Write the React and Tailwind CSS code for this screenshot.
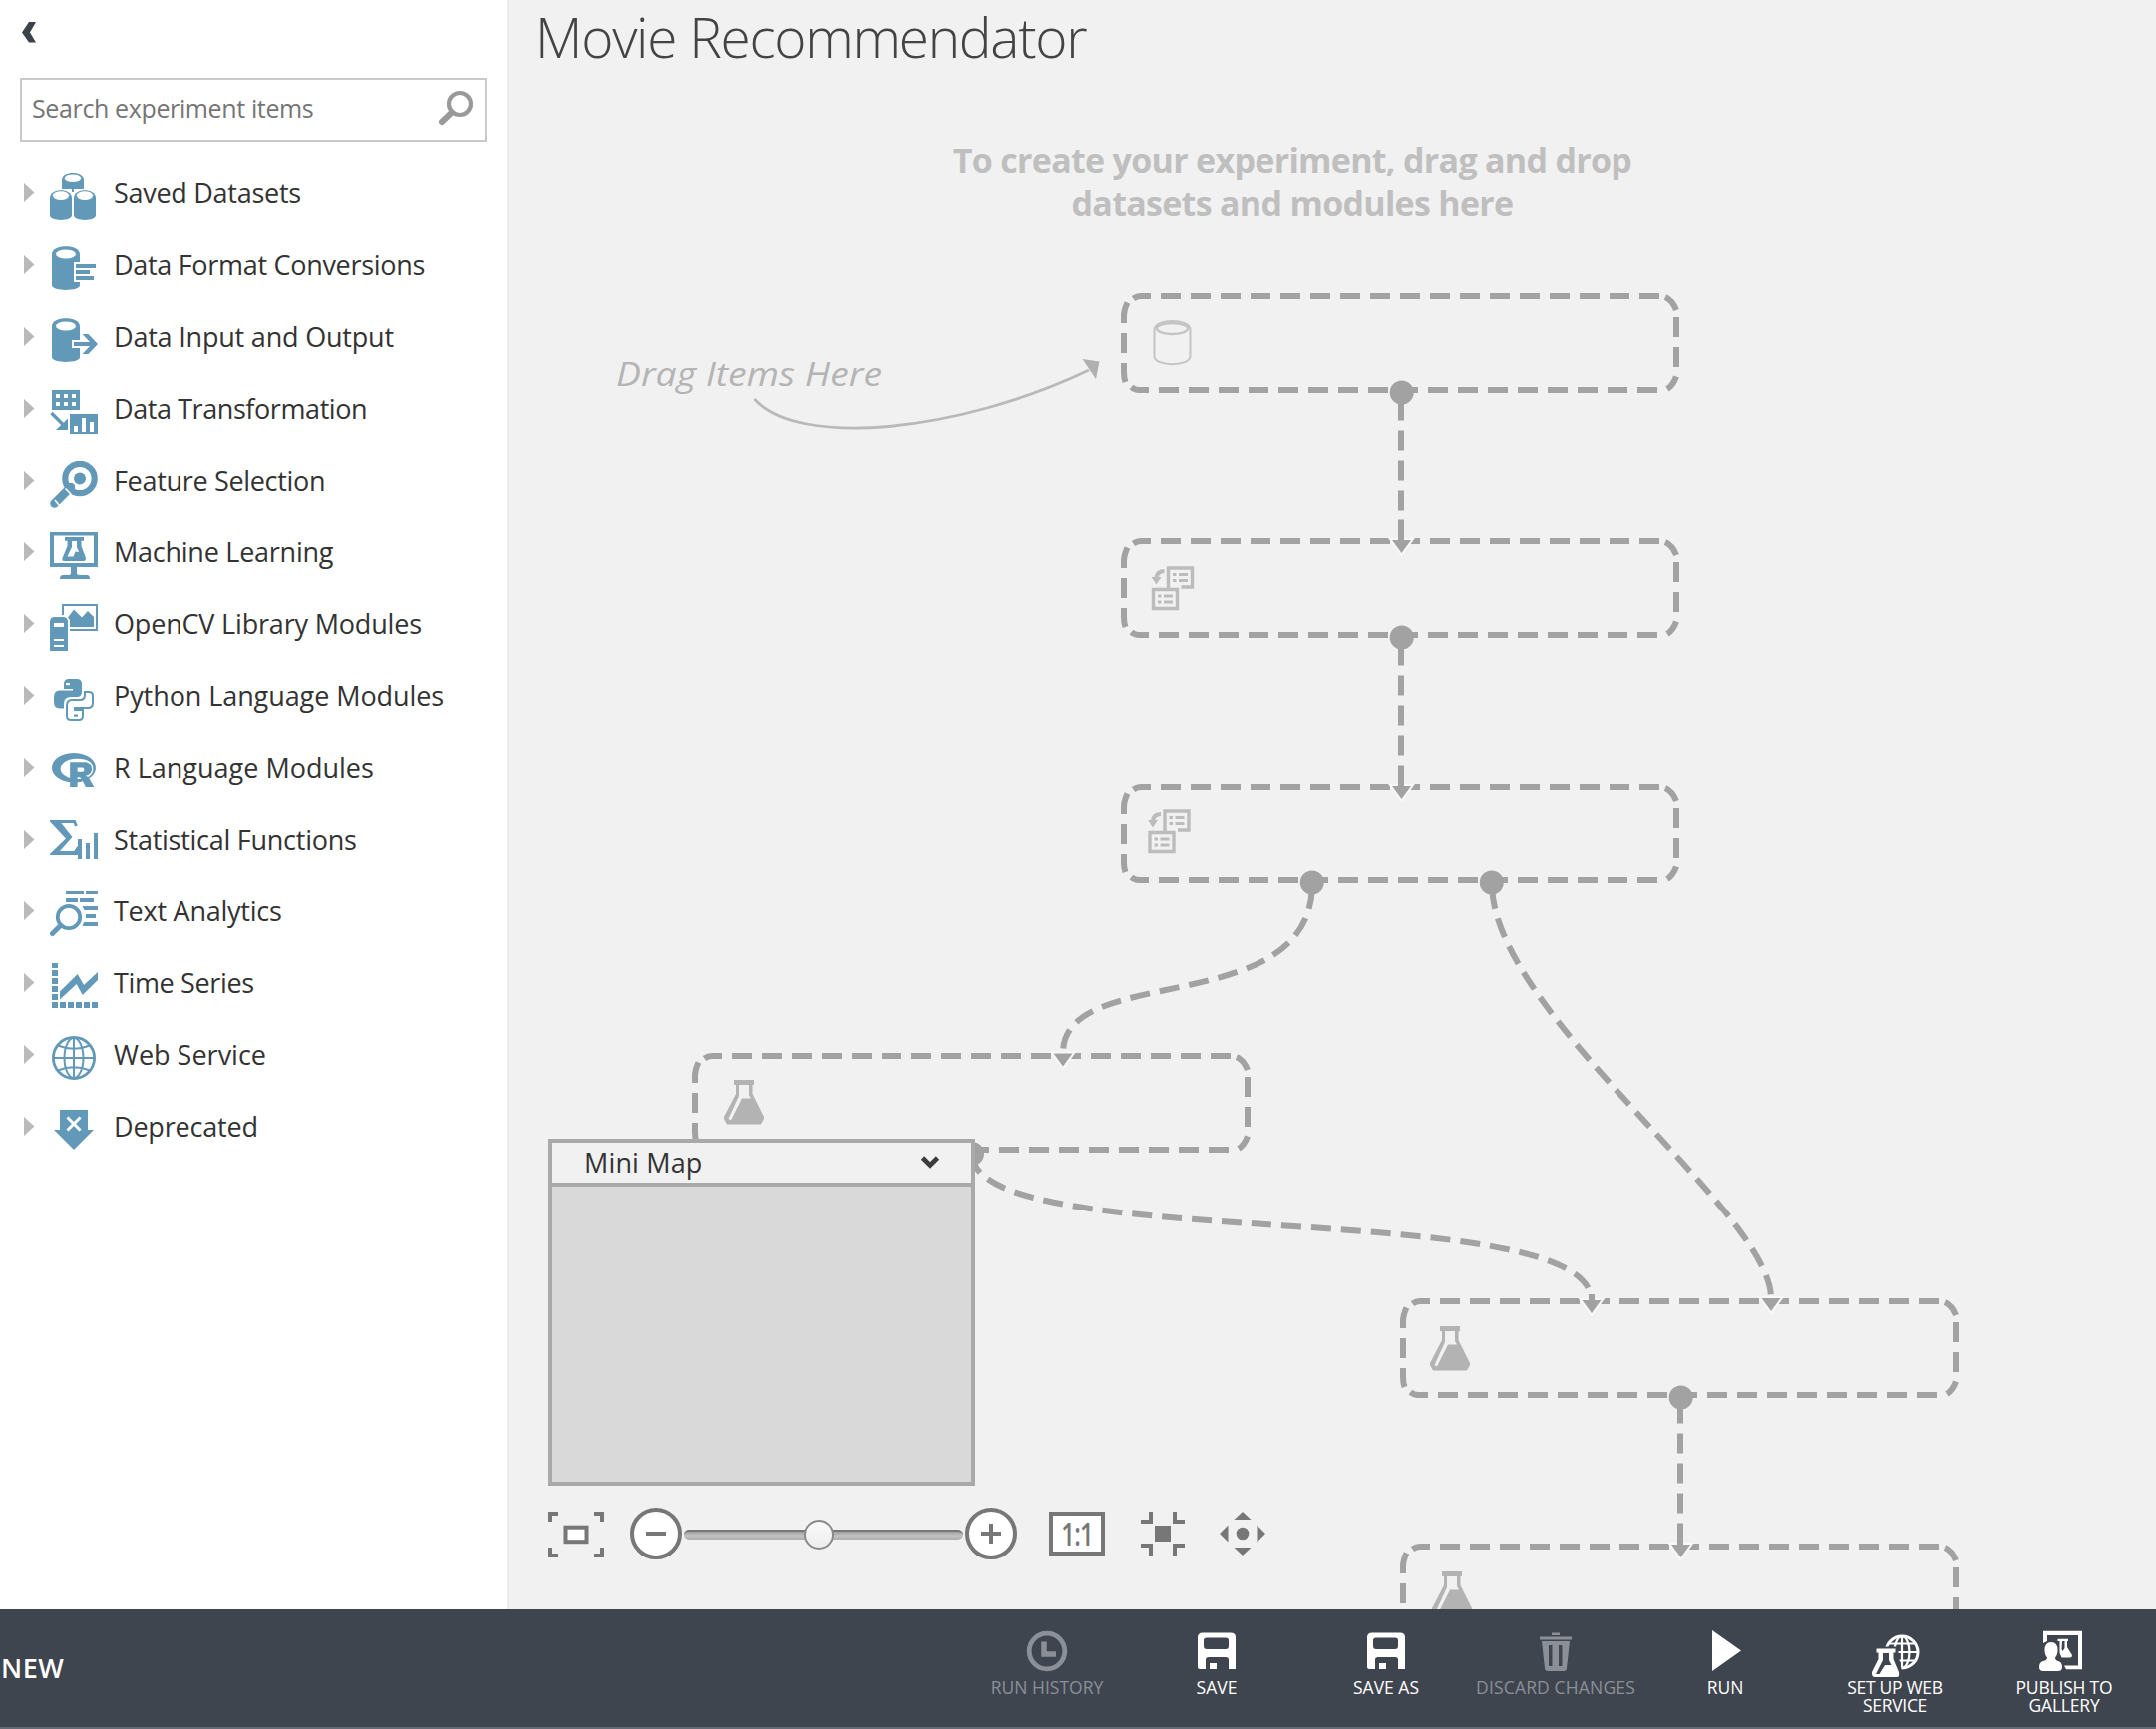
import { FaRProject } from 'react-icons/fa';

const BLUE = '#6399b8';

function Cylinder({ x = 2, y = 1, w = 28, h = 44, rx = 10, ry = 4.5, cy = 9 }) {
  const r = w / 2;
  return (
    <>
      <path d={`M${x} ${y + 8} C${x} ${y - 2.5} ${x + w} ${y - 2.5} ${x + w} ${y + 8} V${y + h - 5} C${x + w} ${y + h + 1.5} ${x} ${y + h + 1.5} ${x} ${y + h - 5} Z`} fill={BLUE} />
      <ellipse cx={x + r} cy={cy} rx={rx} ry={ry} fill="#fff" />
    </>
  );
}

function Flask({ x = 0, y = 0, body = '#b3b3b3', gap = '#f1f1f1' }) {
  return (
    <g transform={`translate(${x} ${y})`}>
      <path d="M10 0 H30 V5 H28.5 V14 L40 37 V39 L37 44.5 H3 L0 39 V37 L12 14 V5 H10 Z" fill={body} />
      <path d="M15 5 H25 V15 L27 18.5 H18.5 L7 40.5 L4.5 39 L15 16 Z" fill={gap} />
      <path d="M18.5 18.5 L7.5 41" stroke={body} strokeWidth="1" />
    </g>
  );
}

const icons = {
  datasets: (
    <>
      <path d="M12 7 C12 -2.3 34 -2.3 34 7 V16 L24 16 V19 H22 V16 L12 16 Z" fill={BLUE} />
      <ellipse cx="23" cy="5.2" rx="8.2" ry="3.8" fill="#fff" />
      <Cylinder x={0} y={17} w={22} h={30} rx={8.2} ry={4.3} cy={22.6} />
      <Cylinder x={24} y={17} w={22} h={30} rx={8.2} ry={4.3} cy={22.6} />
    </>
  ),
  format: (
    <>
      <Cylinder />
      <path d="M24 17 H48 V37 H24 Z" fill="#fff" />
      <path d="M26 19 H46 V23 H26 Z M26 25 H40 V29 H26 Z M26 31 H44 V35 H26 Z" fill={BLUE} />
    </>
  ),
  io: (
    <>
      <Cylinder />
      <path d="M22 23 H32 V31 H22 Z" fill="#fff" />
      <path d="M24 25 H40 L32.5 17 H38.5 L48 27 L38.5 37 H32.5 L40 29 H24 Z" fill={BLUE} />
    </>
  ),
  transform: (
    <>
      <path d="M2 1 H30 V21 H2 Z M20 25 H48 V45 H20 Z" fill={BLUE} />
      <path d="M6 5h4v4h-4z M14 5h4v4h-4z M22 5h4v4h-4z M6 13h4v4h-4z M14 13h4v4h-4z M22 13h4v4h-4z M24 37h4v6h-4z M32 29h4v14h-4z M40 33h4v10h-4z" fill="#fff" />
      <path d="M1.5 24 L14 36.5" stroke={BLUE} strokeWidth="3.4" />
      <path d="M18 29.5 V41 H6 Z" fill={BLUE} />
    </>
  ),
  feature: (
    <>
      <circle cx="30" cy="17.5" r="14.7" fill="none" stroke={BLUE} strokeWidth="6.2" />
      <circle cx="30" cy="17.5" r="6" fill={BLUE} />
      <path d="M21 26 L4.5 42.5" stroke={BLUE} strokeWidth="8.5" strokeLinecap="round" />
      <path d="M15.5 27.5 L21 33 M5 39 L9 44" stroke="#fff" strokeWidth="1.6" />
    </>
  ),
  ml: (
    <>
      <path d="M0 0 H48 V35 H0 Z M4 3.5 V31 H44 V3.5 Z" fillRule="evenodd" fill={BLUE} />
      <path d="M21 35 H27 V41 Q27 43 30 43 H37 Q40 43 40 47 H10 Q10 43 13 43 H18 Q21 43 21 41 Z" fill={BLUE} />
      <path d="M15 5 H34 V8.7 H31.5 V14 L36 26 Q36 29 34 29 H14 Q12 29 12.5 26 L17.5 14 V8.7 H15 Z" fill={BLUE} />
      <path d="M22 9 H27 V15 L29 20 L25.5 19.5 L23.5 24.5 H17.5 L22 15 Z" fill="#fff" />
    </>
  ),
  opencv: (
    <>
      <path d="M13 11 V1 H47 V26 H20" fill="none" stroke={BLUE} strokeWidth="2" />
      <path d="M18 13.5 L24 5.5 L32 13.5 L38 7 L44 13 V23 H20 V16 Z" fill={BLUE} />
      <path d="M0 47 V18 Q0 13 5 13 H13 Q18 13 18 18 V47 Z" fill={BLUE} />
      <path d="M4 19h10v4h-10z M4 35h10v2h-10z M4 41h10v2h-10z" fill="#fff" />
    </>
  ),
  python: (
    <>
      <path d="M14 8 Q14 3 19 3 H27 Q32 3 32 8 V16 Q32 21 27 21 H21 Q14 21 14 28 V32.5 H10 Q4 32.5 4 26 V21 Q4 14.5 10 14.5 H23 V13 H14 Z" fill={BLUE} />
      <path d="M16 7 h4 v2.2 h-4z" fill="#fff" />
      <path d="M35 16 H39 Q43 16 43 20 V27 Q43 32 38 32 H25 V34 H33 V40 Q33 44 29 44 H21 Q17 44 17 40 V30 Q17 24 22 24 H30 Q35 24 35 19 Z" fill="none" stroke={BLUE} strokeWidth="2" />
      <path d="M24 38.5 h4 v2.2 h-4z" fill={BLUE} />
    </>
  ),
  stats: (
    <>
      <path d="M26.5 6 L24.5 1.5 H3 L19.5 17.3 L3 33.5 H25 L28.5 27" fill="none" stroke={BLUE} strokeWidth="3" />
      <path d="M0 0 H9 L22.5 17 L10 31 H24 L28 27 V35 H0 V34 L16 18.5 L0 1.5 Z" fill={BLUE} />
      <path d="M28 19h4v20h-4z M36 23h4v16h-4z M44 13h4v26h-4z" fill={BLUE} />
    </>
  ),
  text: (
    <>
      <path d="M16 0h18v3h-18z M36 0h12v3h-12z M16 7h12v4h-12z M30 7h14v4h-14z M32.5 15h15.5v4h-13.5z M36 23h10v4h-10z M34 31h14v4h-15.5z" fill={BLUE} />
      <circle cx="19" cy="26" r="11.2" fill="none" stroke={BLUE} strokeWidth="3.8" />
      <path d="M10.5 34.5 L2.5 42.5" stroke={BLUE} strokeWidth="5" strokeLinecap="round" />
    </>
  ),
  time: (
    <>
      <path d="M2 0h6v5h-6z M2 7h6v6h-6z M2 15h6v6h-6z M2 23h6v6h-6z M2 31h6v6h-6z M2 39h6v6h-6z M10 39h6v6h-6z M18 39h6v6h-6z M26 39h6v6h-6z M34 39h6v6h-6z M42 39h6v6h-6z" fill={BLUE} />
      <path d="M10 28.5 L27.7 11 L34 22 L48 9 V17 L32.7 32 L26.7 21 L10 36.5 Z" fill={BLUE} />
    </>
  ),
  web: (
    <g fill="none" stroke={BLUE} strokeWidth="2">
      <circle cx="24" cy="23" r="20.6" strokeWidth="2.8" />
      <ellipse cx="24" cy="23" rx="9.5" ry="20" />
      <path d="M24 2 V44 M3 23 H45 M8 10.5 Q24 17 40 10.5 M8 35.5 Q24 29 40 35.5" />
    </g>
  ),
  deprecated: (
    <>
      <path d="M10 3 H38 V23 H44 L24 43 L4 23 H10 Z" fill={BLUE} />
      <path d="M17.5 10.5 L30.5 23.5 M30.5 10.5 L17.5 23.5" stroke="#fff" strokeWidth="3" />
    </>
  ),
};

const items = [
  { icon: 'datasets', label: 'Saved Datasets', tracking: 'tracking-[-0.28px]' },
  { icon: 'format', label: 'Data Format Conversions', tracking: 'tracking-[-0.3px]' },
  { icon: 'io', label: 'Data Input and Output', tracking: 'tracking-[-0.2px]' },
  { icon: 'transform', label: 'Data Transformation', tracking: 'tracking-[-0.42px]' },
  { icon: 'feature', label: 'Feature Selection', tracking: 'tracking-[-0.32px]' },
  { icon: 'ml', label: 'Machine Learning', tracking: 'tracking-[-0.25px]' },
  { icon: 'opencv', label: 'OpenCV Library Modules', tracking: 'tracking-[-0.18px]' },
  { icon: 'python', label: 'Python Language Modules', tracking: 'tracking-[-0.08px]' },
  { icon: 'r', label: 'R Language Modules', tracking: 'tracking-normal' },
  { icon: 'stats', label: 'Statistical Functions', tracking: 'tracking-[-0.26px]' },
  { icon: 'text', label: 'Text Analytics', tracking: 'tracking-[-0.25px]' },
  { icon: 'time', label: 'Time Series', tracking: 'tracking-[-0.36px]' },
  { icon: 'web', label: 'Web Service', tracking: 'tracking-normal' },
  { icon: 'deprecated', label: 'Deprecated', tracking: 'tracking-[-0.2px]' },
];

function Sidebar() {
  return (
    <aside className="flex w-[510px] shrink-0 flex-col border-r-2 border-[#ececec] bg-white">
      <div className="flex h-[78px] items-start pt-[22px] pl-[21px]">
        <svg width="16" height="21" viewBox="0 0 16 21">
          <path d="M8 0 H15 L9 10.5 L15 20.5 H8 L1 10.5 Z" fill="#3c424a" />
        </svg>
      </div>
      <div className="mr-5 ml-5 flex h-16 items-center justify-between border-2 border-[#c9c9c9] pr-[10px] pl-[10px]">
        <span className="pb-0.5 text-[25px] tracking-[-0.37px] text-[#757575]">Search experiment items</span>
        <svg width="38" height="40" viewBox="0 0 38 40" className="mb-1">
          <circle cx="23" cy="16" r="11" fill="none" stroke="#999" strokeWidth="4.2" />
          <path d="M15 24.5 L5 34" stroke="#999" strokeWidth="6" strokeLinecap="round" />
        </svg>
      </div>
      <ul className="mt-4 flex flex-col">
        {items.map((it) => (
          <li key={it.label} className="flex h-[72px] items-center">
            <svg width="12" height="20" viewBox="0 0 12 20" className="ml-6 shrink-0">
              <path d="M0 0 L10.5 9.5 L0 19 Z" fill="#bababa" />
            </svg>
            {it.icon === 'r' ? (
              <span className="mt-2 ml-[14px] flex h-12 w-12 shrink-0 justify-center">
                <FaRProject size={44} color={BLUE} />
              </span>
            ) : (
              <svg width="48" height="48" viewBox="0 0 48 48" className="mt-2 ml-[14px] shrink-0">{icons[it.icon]}</svg>
            )}
            <span className={`ml-4 pt-px text-[27px] whitespace-nowrap text-[#333] ${it.tracking}`}>{it.label}</span>
          </li>
        ))}
      </ul>
    </aside>
  );
}

function DashedBox({ x, y }) {
  return (
    <g transform={`translate(${x} ${y})`} fill="none" stroke="#a2a2a2" strokeWidth="6">
      <path d="M37 0 H537" strokeDasharray="20 10" />
      <path d="M35 94 H535" strokeDasharray="20 10" />
      <path d="M554 21 V71" strokeDasharray="20 10" />
      <path d="M9.5 2.5 Q13 0 17 0 H27 M543 1 Q550 4 554 14 M554 80.5 Q551 89 545 93 M25 94 H15 Q11 94 7.5 91 M1.5 86 Q0 82 0 76 V67 M0 57 V37 M0 27 V20 Q0 14 3.5 6.5" />
    </g>
  );
}

function Port({ x, y }) {
  return <circle cx={x} cy={y} r="12" fill="#a2a2a2" />;
}

function Head({ x, y }) {
  return <path d={`M${x - 9.5} ${y} H${x + 9.5} L${x} ${y + 13} Z`} fill="#a2a2a2" stroke="#f8f8f8" strokeWidth="4" paintOrder="stroke" />;
}

function TableIcon({ x, y }) {
  return (
    <g transform={`translate(${x} ${y})`} fill="none" stroke="#bcbcbc">
      <path d="M17 22 V2 H41 V21 H30" strokeWidth="3.4" />
      <path d="M2 23.5 H26 V42.5 H2 Z" strokeWidth="3.4" />
      <path d="M21.5 8.500 h3.5 M27.5 8.5 h9 M21.5 14.5 h3.5 M27.5 14.5 h9 M6.5 30 h3.5 M12.5 30 h9 M6.5 36 h3.5 M12.5 36 h9" strokeWidth="3" />
      <path d="M13 5 Q5 5 5 13" strokeWidth="4" />
      <path d="M0 11 H10 L5 18.5 Z" fill="#bcbcbc" stroke="none" />
    </g>
  );
}

function Diagram() {
  return (
    <svg className="absolute inset-0" width="1652" height="1614" viewBox="510 0 1652 1614">
      <DashedBox x={1127} y={297} />
      <DashedBox x={1127} y={543} />
      <DashedBox x={1127} y={789} />
      <DashedBox x={697} y={1059} />
      <DashedBox x={1407} y={1305} />
      <DashedBox x={1407} y={1551} />

      <g fill="none" stroke="#a2a2a2" strokeWidth="6" strokeDasharray="20 10">
        <path d="M1405 401.5 V545" />
        <path d="M1405 647.5 V790" />
        <path d="M1685 1407.5 V1552" />
        <path d="M1316 886 C1316 1024 1066 964 1066 1056" strokeDashoffset="-6" />
        <path d="M1496 886 C1496 1017 1776 1214 1776 1302" strokeDashoffset="-6" />
        <path d="M975 1157 C975 1261 1596 1196 1596 1305" strokeDashoffset="-1" />
      </g>
      <Head x={1405.5} y={542} />
      <Head x={1405.5} y={788} />
      <Head x={1066} y={1056.5} />
      <Head x={1596} y={1304} />
      <Head x={1776} y={1302} />
      <Head x={1685.5} y={1549} />
      <path d="M1402 535 h6 v10 h-6z M1402 781 h6 v10 h-6z M1682 1541 h6 v10 h-6z M1593 1298 h6 v8 h-6z" fill="#a2a2a2" />
      <Port x={1405.7} y={393.5} />
      <Port x={1405.7} y={639.5} />
      <Port x={1315.8} y={885.5} />
      <Port x={1495.8} y={885.5} />
      <Port x={975} y={1157} />
      <Port x={1685.7} y={1401.5} />

      <g fill="none" stroke="#c4c4c4" strokeWidth="2">
        <path d="M1157.5 331 C1157.5 319 1193.5 319 1193.5 331 V357 C1193.5 368 1157.5 368 1157.5 357 Z" />
        <ellipse cx="1175.5" cy="329.5" rx="15.5" ry="5.5" strokeWidth="2.4" />
      </g>
      <TableIcon x={1154.5} y={568} />
      <TableIcon x={1151} y={811} />
      <Flask x={726} y={1083} />
      <Flask x={1434} y={1330} />
      <Flask x={1436} y={1576} />

      <path d="M756.5 400 C800 449 960 434 1092 371" fill="none" stroke="#b9b9b9" strokeWidth="2.8" />
      <path d="M1085.5 360 L1102.5 362.5 L1099 380 Z" fill="#b0b0b0" />
      <text x="618" y="386.5" fontSize="32" fontStyle="italic" fill="#b4b4b4" textLength="266" lengthAdjust="spacingAndGlyphs" className="font-['Open_Sans']">Drag Items Here</text>
    </svg>
  );
}

function MiniMap() {
  return (
    <div className="flex h-[348px] w-[428px] flex-col border-4 border-[#a9a9a9] bg-[#d9d9d9]">
      <div className="flex h-11 items-center justify-between border-b-4 border-[#a9a9a9] bg-[#f1f1f1] pr-[31px] pl-8">
        <span className="text-[27px] leading-10 tracking-[0.15px] text-[#333]">Mini Map</span>
        <svg width="20" height="14" viewBox="0 0 20 14" className="mb-0.5">
          <path d="M2.5 3 L10 10.5 L17.5 3" fill="none" stroke="#3c3c3c" strokeWidth="4.6" />
        </svg>
      </div>
    </div>
  );
}

function RoundButton({ plus }) {
  return (
    <svg width="52" height="52" viewBox="0 0 52 52" className="shrink-0">
      <circle cx="26" cy="26" r="24" fill="#fff" stroke="#777" strokeWidth="4" />
      <path d={plus ? 'M16 26 H36 M26 16 V36' : 'M16 26 H36'} stroke="#777" strokeWidth="4" />
    </svg>
  );
}

function ZoomBar() {
  return (
    <div className="mt-[22px] flex h-[52px] items-center">
      <svg width="56" height="46" viewBox="0 0 56 46" className="mt-0.5 shrink-0">
        <path d="M2 10 V2 H10 M46 2 H54 V10 M54 36 V44 H46 M10 44 H2 V36" fill="none" stroke="#777" strokeWidth="4" />
        <rect x="17.5" y="15.7" width="21" height="14.5" fill="#fff" stroke="#777" strokeWidth="4" />
      </svg>
      <div className="ml-[26px] flex items-center">
        <RoundButton />
        <div className="relative mt-[2px] ml-[2px] h-[10px] w-[280px] rounded-[5px] border-t-2 border-[#777] bg-linear-to-b from-[#a0a0a0] via-[#c2c2c2] to-[#adadad]">
          <div className="absolute -top-[12px] left-[120px] h-[30px] w-[30px] rounded-full border-2 border-[#8a8a8a] bg-linear-to-b from-[#fafafa] to-[#ededed]" />
        </div>
        <div className="ml-[2px] flex"><RoundButton plus /></div>
      </div>
      <div className="ml-8 flex h-11 w-[56px] items-center justify-center border-4 border-[#777] bg-white text-[32px] leading-none font-semibold tracking-[-1px] text-[#777]">
        <span className="inline-block scale-x-75">1:1</span>
      </div>
      <svg width="44" height="44" viewBox="0 0 44 44" className="ml-9 shrink-0">
        <path d="M10 0 V10 H0 M34 0 V10 H44 M10 44 V34 H0 M34 44 V34 H44" fill="none" stroke="#777" strokeWidth="4" />
        <rect x="14" y="14" width="16" height="16" fill="#777" />
      </svg>
      <svg width="46" height="44" viewBox="0 0 46 44" className="ml-[35px] shrink-0">
        <circle cx="23" cy="22" r="6.3" fill="#777" />
        <path d="M23 0 L31.500 8 H14.5 Z M23 44 L14.5 36 H31.5 Z M0 22 L8.5 13.5 V30.5 Z M46 22 L37.5 13.5 V30.5 Z" fill="#777" />
      </svg>
    </div>
  );
}

const commandIcons = {
  history: (
    <g fill="none" stroke="#8b8f98">
      <circle cx="22" cy="22" r="17.8" strokeWidth="4.8" />
      <path d="M19 12.5 V25 H31" strokeWidth="5.5" />
    </g>
  ),
  save: (
    <>
      <path d="M3 8 Q3 3.5 8 3.5 H36 Q41 3.5 41 8 V40 H34 V30.5 Q34 28 31 28 H14 Q11 28 11 30.5 V40 H5 Q3 40 3 38 Z M9 11 V17 Q9 20 12 20 H31 Q34 20 34 17 V11 Q34 8.5 31 8.5 H12 Q9 8.5 9 11 Z" fillRule="evenodd" fill="#fff" />
      <rect x="15" y="34" width="7" height="6" fill="#fff" />
    </>
  ),
  trash: (
    <path d="M18 3.5 H26 V6 H18 Z M6 7.5 H38 V10.5 H6 Z M8 12 H36 L33 39 Q33 42 30 42 H14 Q11 42 11 39 Z M15 16 V37 H18.5 V16 Z M25 16 V37 H28.5 V16 Z" fillRule="evenodd" fill="#8b8f98" />
  ),
  run: <path d="M9 1 L38 21.5 L9 42 Z" fill="#fff" />,
  service: (
    <>
      <g fill="none" stroke="#fff" strokeWidth="2.2">
        <circle cx="29" cy="23" r="16" strokeWidth="3" />
        <ellipse cx="29" cy="23" rx="7.5" ry="16" />
        <path d="M29 7 V39 M13 23 H45 M16 14.5 H42 M16 31.5 H42" />
      </g>
      <path d="M2 17.5 H25.5 V27 L29 42 V50 H-3 V40 L2 29 Z" fill="#3f454e" />
      <path d="M3.5 19.5 H22.5 V23.5 H20.5 V30 L26 43 Q27 48 24 48 H2 Q-1.5 48 -1 43 L5.5 30 V23.5 H3.5 Z" fill="#fff" />
      <path d="M10 24 H16 V31 L18.5 36 H12 L6.5 45 H3 L10 31 Z" fill="#3f454e" />
    </>
  ),
  publish: (
    <>
      <path d="M1 14 V1.7 H40 V40.3 H24 L22 36.5 H36 V6 H5 V12 Z" fill="#fff" />
      <path d="M9 13 Q15.5 13 15.5 21 Q15.5 26 13 28.5 Q13 31 16 32 Q20 33 20 38 Q20 42 16 42 H1 Q-3 42 -3 38 Q-3 33 1 32 Q5 31 5 28.5 Q2.5 26 2.5 21 Q2.5 13 9 13 Z" fill="#fff" />
      <path d="M15.5 9.7 H26 V12 H25 V18 L30 26 Q30 28.5 28 28.5 H19.5 L17.5 24 V12 H15.5 Z" fill="#fff" />
      <path d="M20 12 H22.5 V19 L20.5 22 L19.5 20 Z" fill="#3f454e" />
    </>
  ),
};

const commands = [
  { icon: 'history', label: 'RUN HISTORY', disabled: true, width: 'w-[120px]' },
  { icon: 'save', label: 'SAVE', width: 'w-[120px]' },
  { icon: 'save', label: 'SAVE AS', width: 'w-[120px]' },
  { icon: 'trash', label: 'DISCARD CHANGES', disabled: true, width: 'w-[168px] tracking-[0.15px]' },
  { icon: 'run', label: 'RUN', width: 'w-[120px]' },
  { icon: 'service', label: 'SET UP WEB SERVICE', width: 'w-[120px] tracking-[-0.3px]' },
  { icon: 'publish', label: 'PUBLISH TO GALLERY', width: 'w-[120px] tracking-[-0.2px]' },
];

function CommandBar() {
  return (
    <footer className="flex h-[120px] items-stretch justify-between border-b-2 border-[#666a75] bg-[#3f454e] pr-[7px] pl-px">
      <div className="flex items-center text-[27px] font-semibold tracking-[0.5px] text-white">NEW</div>
      <div className="flex">
        {commands.map((c) => (
          <div key={c.label} className="flex w-[170px] flex-col items-center pt-5">
            <svg width="44" height="44" viewBox="0 0 44 44" className="overflow-visible">{commandIcons[c.icon]}</svg>
            <span className={`mt-[5px] text-center text-[17.5px] leading-[18px] ${c.width} ${c.disabled ? 'text-[#8b8f98]' : 'text-white'}`}>{c.label}</span>
          </div>
        ))}
      </div>
    </footer>
  );
}

export default function App() {
  return (
    <div className="flex h-[1734px] w-[2162px] flex-col overflow-hidden bg-[#f1f1f1] font-['Open_Sans','Noto_Sans',sans-serif]">
      <div className="flex h-[1614px]">
        <Sidebar />
        <main className="relative flex flex-1 flex-col justify-between overflow-hidden">
          <Diagram />
          <div className="relative">
            <h1 className="pl-[27px] text-[55px] leading-[74px] font-light tracking-[-1.3px] text-[#444]">Movie Recommendator</h1>
            <p className="mx-auto mt-16 w-[820px] pr-20 text-center text-[34px] leading-[44px] font-bold tracking-[-0.7px] text-[#bfbfbf]">
              To create your experiment, drag and drop
              <br />
              datasets and modules here
            </p>
          </div>
          <div className="relative pb-[50px] pl-10">
            <MiniMap />
            <ZoomBar />
          </div>
        </main>
      </div>
      <CommandBar />
    </div>
  );
}
